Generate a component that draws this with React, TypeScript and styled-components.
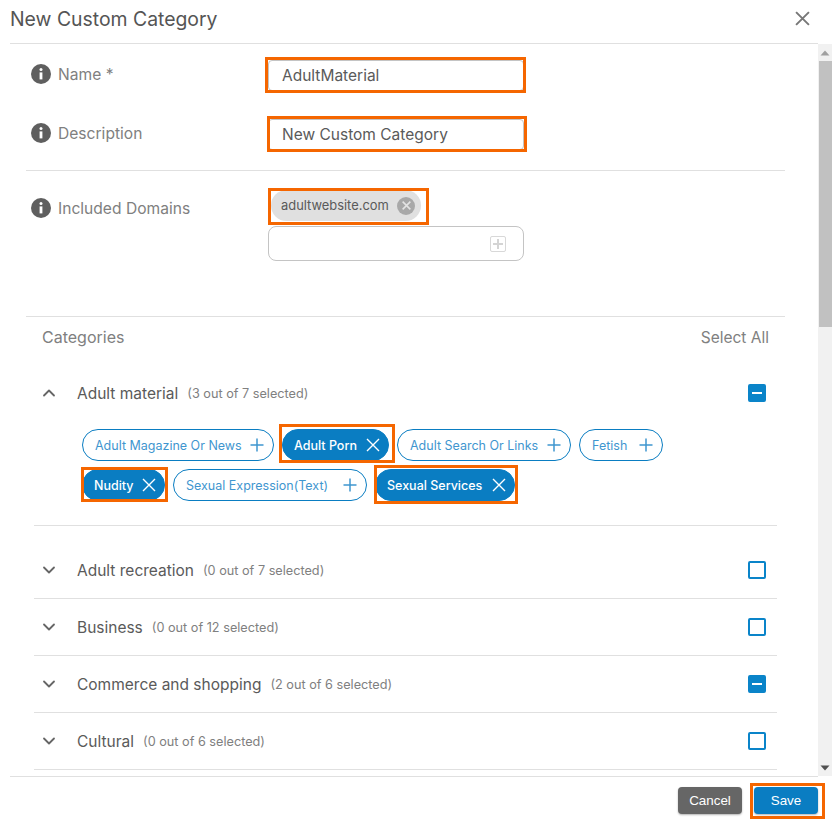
import React from 'react';
import styled, { createGlobalStyle } from 'styled-components';
import { ChevronDown, ChevronUp } from 'lucide-react';

const GlobalStyle = createGlobalStyle`
  html, body {
    margin: 0;
    padding: 0;
    background: #fff;
    overflow: hidden;
  }
  * {
    box-sizing: border-box;
  }
`;

const chips = [
  { label: 'Adult Magazine Or News', width: 192 },
  { label: 'Adult Porn', width: 107, selected: true, mark: { t: -5, r: -6, b: -2, l: -3 } },
  { label: 'Adult Search Or Links', width: 174 },
  { label: 'Fetish', width: 84 },
  { label: 'Nudity', width: 83, selected: true, mark: { t: -2, r: -3, b: -1, l: -1 } },
  { label: 'Sexual Expression(Text)', width: 194 },
  { label: 'Sexual Services', width: 140, selected: true, mark: { t: -4, r: -3, b: -3, l: -1 } },
];

const rows = [
  { name: 'Adult recreation', count: '(0 out of 7 selected)', partial: false },
  { name: 'Business', count: '(0 out of 12 selected)', partial: false },
  { name: 'Commerce and shopping', count: '(2 out of 6 selected)', partial: true },
  { name: 'Cultural', count: '(0 out of 6 selected)', partial: false },
];

const InfoIcon = () => (
  <svg width="20" height="20" viewBox="0 0 20 20">
    <circle cx="10" cy="10" r="10" fill="#5f5f5f" />
    <circle cx="10" cy="5.6" r="1.5" fill="#fff" />
    <rect x="8.6" y="8.4" width="2.8" height="7" fill="#fff" />
  </svg>
);

const CrossIcon = ({ size = 14, color = '#fff', width = 1.4 }: { size?: number; color?: string; width?: number }) => (
  <svg width={size} height={size} viewBox="0 0 14 14">
    <path d="M1 1L13 13M13 1L1 13" stroke={color} strokeWidth={width} fill="none" />
  </svg>
);

const PlusIcon = () => (
  <svg width="14" height="14" viewBox="0 0 14 14">
    <path d="M7 0.5V13.5M0.5 7H13.5" stroke="#3f96cf" strokeWidth="1.5" fill="none" />
  </svg>
);

const App: React.FC = () => {
  return (
    <Page>
      <GlobalStyle />
      <TitleBar>
        <Title>New Custom Category</Title>
        <CloseButton>
          <CrossIcon size={15} color="#777" width={1.8} />
        </CloseButton>
      </TitleBar>

      <Middle>
        <ScrollArea>
          <Form>
            <FieldRow>
              <FieldLabel>
                <InfoIcon /> Name *
              </FieldLabel>
              <Marked $t={-3} $r={-2} $b={-2} $l={-3}>
                <TextInput>AdultMaterial</TextInput>
              </Marked>
            </FieldRow>
            <FieldRow>
              <FieldLabel>
                <InfoIcon /> Description
              </FieldLabel>
              <Marked $t={-3} $r={-3} $b={-2} $l={-1}>
                <TextInput>New Custom Category</TextInput>
              </Marked>
            </FieldRow>
          </Form>

          <Divider />

          <DomainsRow>
            <DomainsLabel>
              <InfoIcon /> Included Domains
            </DomainsLabel>
            <DomainsColumn>
              <DomainChipWrap>
                <Marked $t={-2} $r={-8} $b={-4} $l={-3}>
                  <DomainChip>
                    adultwebsite.com
                    <DomainRemove>
                      <CrossIcon size={9} color="#e4e4e4" width={2.4} />
                    </DomainRemove>
                  </DomainChip>
                </Marked>
              </DomainChipWrap>
              <DomainInput>
                <SmallPlus>
                  <svg width="10" height="10" viewBox="0 0 10 10">
                    <path d="M5 0V10M0 5H10" stroke="#d4d4d4" strokeWidth="2" fill="none" />
                  </svg>
                </SmallPlus>
              </DomainInput>
            </DomainsColumn>
          </DomainsRow>

          <Divider />

          <CategoriesHeader>
            <span>Categories</span>
            <SelectAll>Select All</SelectAll>
          </CategoriesHeader>

          <CategoryList>
            <ExpandedSection>
              <CategoryRow>
                <Chevron>
                  <ChevronUp size={20} color="#666" strokeWidth={2.2} />
                </Chevron>
                <CategoryName>Adult material</CategoryName>
                <CategoryCount>(3 out of 7 selected)</CategoryCount>
                <Checkbox $partial />
              </CategoryRow>
              <ChipList>
                {chips.map(chip => {
                  const pill = (
                    <Chip key={chip.label} $selected={chip.selected} $width={chip.width}>
                      {chip.label}
                      {chip.selected ? <CrossIcon /> : <PlusIcon />}
                    </Chip>
                  );
                  return chip.mark ? (
                    <Marked key={chip.label} $t={chip.mark.t} $r={chip.mark.r} $b={chip.mark.b} $l={chip.mark.l}>
                      {pill}
                    </Marked>
                  ) : (
                    pill
                  );
                })}
              </ChipList>
            </ExpandedSection>

            <CollapsedRows>
              {rows.map(row => (
                <CollapsedRow key={row.name}>
                  <CategoryRow>
                    <Chevron>
                      <ChevronDown size={20} color="#666" strokeWidth={2.2} />
                    </Chevron>
                    <CategoryName>{row.name}</CategoryName>
                    <CategoryCount>{row.count}</CategoryCount>
                    <Checkbox $partial={row.partial} />
                  </CategoryRow>
                </CollapsedRow>
              ))}
            </CollapsedRows>
          </CategoryList>
        </ScrollArea>

        <ScrollBar>
          <ScrollButton>
            <svg width="10" height="6" viewBox="0 0 10 6">
              <path d="M0.5 5.5H9.5L5 0.5Z" fill="#a0a0a0" />
            </svg>
          </ScrollButton>
          <ScrollThumb />
          <ScrollTrack />
          <ScrollButton>
            <svg width="10" height="6" viewBox="0 0 10 6">
              <path d="M0.5 0.5H9.5L5 5.5Z" fill="#505050" />
            </svg>
          </ScrollButton>
        </ScrollBar>
      </Middle>

      <Footer>
        <CancelButton>Cancel</CancelButton>
        <Marked $t={-4} $r={-7} $b={-5} $l={-4}>
          <SaveButton>Save</SaveButton>
        </Marked>
      </Footer>
    </Page>
  );
};

const Page = styled.div`
  display: flex;
  flex-direction: column;
  width: 832px;
  height: 822px;
  padding-left: 10px;
  overflow: hidden;
  background: #fff;
  font-family: Inter, 'Noto Sans', sans-serif;
  color: #666;
`;

const TitleBar = styled.div`
  display: flex;
  align-items: center;
  justify-content: space-between;
  flex: none;
  height: 44px;
  margin-right: 14px;
  padding-bottom: 6px;
  border-bottom: 1px solid #e0e0e0;
`;

const Title = styled.h1`
  margin: 0;
  font-size: 19.4px;
  font-weight: 400;
  color: #555;
`;

const CloseButton = styled.div`
  display: flex;
  margin-right: 8px;
`;

const Middle = styled.div`
  display: flex;
  flex: 1;
  min-height: 0;
`;

const ScrollArea = styled.div`
  flex: 1;
  min-width: 0;
  overflow: hidden;
`;

const ScrollBar = styled.div`
  display: flex;
  flex-direction: column;
  flex: none;
  width: 14px;
  background: #f1f1f1;
`;

const ScrollButton = styled.div`
  display: flex;
  align-items: center;
  justify-content: center;
  flex: none;
  height: 17px;
`;

const ScrollThumb = styled.div`
  flex: none;
  height: 266px;
  margin-left: 1px;
  background: #c1c1c1;
`;

const ScrollTrack = styled.div`
  flex: 1;
`;

const Form = styled.div`
  display: flex;
  flex-direction: column;
  gap: 28px;
  padding: 16px 0 20px 21px;
`;

const FieldRow = styled.div`
  display: grid;
  grid-template-columns: 237px 256px;
`;

const FieldLabel = styled.label`
  display: flex;
  align-items: center;
  gap: 7px;
  height: 28px;
  font-size: 15.6px;
  color: #808080;

  & > svg {
    flex: none;
  }
`;

const DomainsLabel = styled(FieldLabel)`
  margin-top: 4px;
`;

const Marked = styled.div<{ $t: number; $r: number; $b: number; $l: number }>`
  position: relative;

  &::after {
    content: '';
    position: absolute;
    top: ${p => p.$t}px;
    right: ${p => p.$r}px;
    bottom: ${p => p.$b}px;
    left: ${p => p.$l}px;
    border: 3px solid #f56600;
    pointer-events: none;
  }
`;

const TextInput = styled.div`
  display: flex;
  align-items: center;
  height: 31px;
  padding-left: 13px;
  border: 1px solid #c4c4c4;
  border-radius: 4px;
  font-size: 15.5px;
  color: #5a5a5a;
`;

const Divider = styled.div`
  height: 1px;
  margin: 0 33px 0 16px;
  background: #e0e0e0;
`;

const DomainsRow = styled.div`
  display: grid;
  grid-template-columns: 237px 256px;
  height: 145px;
  padding: 19px 0 0 21px;
`;

const DomainsColumn = styled.div`
  display: flex;
  flex-direction: column;
  gap: 5px;
`;

const DomainChipWrap = styled.div`
  align-self: flex-start;
  margin-left: 3px;
`;

const DomainChip = styled.div`
  display: flex;
  align-items: center;
  justify-content: space-between;
  width: 150px;
  height: 31px;
  padding: 0 6px 0 10px;
  border-radius: 16px;
  background: #e0e0e0;
  font-size: 12.9px;
  color: #5a5a5a;
`;

const DomainRemove = styled.span`
  display: flex;
  align-items: center;
  justify-content: center;
  width: 18px;
  height: 18px;
  border-radius: 50%;
  background: #a8a8a8;
`;

const DomainInput = styled.div`
  display: flex;
  align-items: center;
  justify-content: flex-end;
  height: 35px;
  padding-right: 17px;
  border: 1px solid #c4c4c4;
  border-radius: 8px;
`;

const SmallPlus = styled.span`
  display: flex;
  align-items: center;
  justify-content: center;
  width: 16px;
  height: 16px;
  border: 1px solid #d8d8d8;
  border-radius: 2px;
`;

const CategoriesHeader = styled.div`
  display: flex;
  align-items: center;
  justify-content: space-between;
  height: 40px;
  margin-right: 49px;
  padding-left: 32px;
  font-size: 16px;
  color: #808080;
`;

const SelectAll = styled.span`
  font-size: 15.5px;
`;

const CategoryList = styled.div`
  margin: 8px 41px 0 24px;
`;

const ExpandedSection = styled.div`
  padding-bottom: 24px;
  border-bottom: 1px solid #e0e0e0;
`;

const CategoryRow = styled.div`
  display: flex;
  align-items: center;
  height: 56px;
  padding: 0 11px 0 5px;
`;

const Chevron = styled.span`
  display: flex;
  justify-content: center;
  width: 20px;
  margin-right: 18px;
`;

const CategoryName = styled.span`
  font-size: 15.5px;
  color: #5a5a5a;
`;

const CategoryCount = styled.span`
  margin-left: 9px;
  font-size: 12.7px;
  color: #808080;
`;

const Checkbox = styled.span<{ $partial?: boolean }>`
  display: flex;
  align-items: center;
  justify-content: center;
  width: 18px;
  height: 18px;
  margin-left: auto;
  border: 2px solid #0a84c9;
  border-radius: 2px;
  background: ${p => (p.$partial ? '#0a84c9' : '#fff')};

  &::before {
    content: '';
    display: ${p => (p.$partial ? 'block' : 'none')};
    width: 10px;
    height: 2px;
    background: #fff;
  }
`;

const ChipList = styled.div`
  display: flex;
  flex-wrap: wrap;
  gap: 8px;
  padding: 8px 60px 0 48px;
`;

const Chip = styled.div<{ $selected?: boolean; $width: number }>`
  display: flex;
  align-items: center;
  justify-content: space-between;
  width: ${p => p.$width}px;
  height: 32px;
  padding: 0 ${p => (p.$selected ? '8px' : '9px')} 0 ${p => (p.$selected ? '11px' : '12px')};
  border: 1px solid #0a7dc2;
  border-radius: 16px;
  background: ${p => (p.$selected ? '#0a7dc2' : '#fff')};
  font-size: 12.5px;
  font-weight: ${p => (p.$selected ? 500 : 400)};
  color: ${p => (p.$selected ? '#fff' : '#3f96cf')};
  white-space: nowrap;
`;

const CollapsedRows = styled.div`
  padding-top: 16px;
`;

const CollapsedRow = styled.div`
  border-bottom: 1px solid #e0e0e0;
`;

const Footer = styled.div`
  display: flex;
  align-items: flex-start;
  justify-content: flex-end;
  flex: none;
  gap: 12px;
  height: 46px;
  margin-right: 14px;
  padding-top: 10px;
  border-top: 1px solid #e0e0e0;
`;

const BaseButton = styled.button`
  width: 64px;
  height: 27px;
  padding: 0;
  border: none;
  border-radius: 4px;
  box-shadow: 0 1px 2px rgba(0, 0, 0, 0.3);
  font-family: 'Liberation Sans', Arial, sans-serif;
  font-size: 13.4px;
  color: #fff;
`;

const CancelButton = styled(BaseButton)`
  background: #666;
`;

const SaveButton = styled(BaseButton)`
  display: block;
  background: #0a7dc2;
`;

export default App;
